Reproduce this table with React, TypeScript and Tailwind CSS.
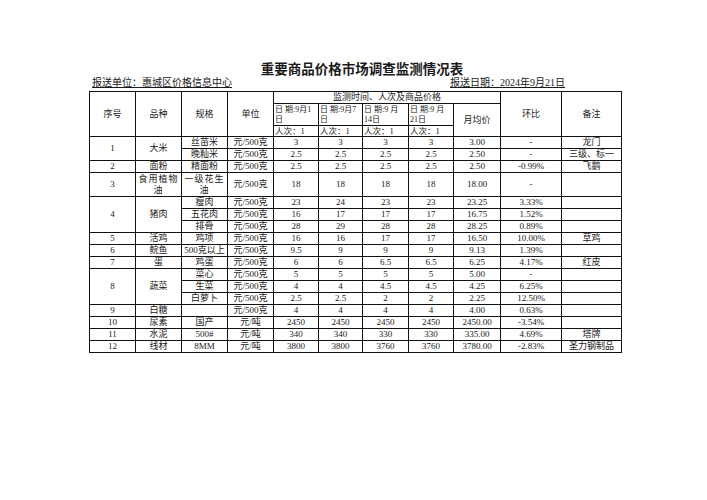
type Row = {
  no?: string;
  noSpan?: number;
  kind?: string;
  spec: string;
  unit?: string;
  p: string[];
  avg: string;
  ratio: string;
  note?: string;
  tall?: boolean;
};

const rows: Row[] = [
  { no: '1', noSpan: 2, kind: '大米', spec: '丝苗米', p: ['3', '3', '3', '3'], avg: '3.00', ratio: '-', note: '龙门' },
  { spec: '晚籼米', p: ['2.5', '2.5', '2.5', '2.5'], avg: '2.50', ratio: '-', note: '三级、标一' },
  { no: '2', kind: '面粉', spec: '精面粉', p: ['2.5', '2.5', '2.5', '2.5'], avg: '2.50', ratio: '-0.99%', note: '飞鹅' },
  { no: '3', kind: '食用植物油', spec: '一级花生油', p: ['18', '18', '18', '18'], avg: '18.00', ratio: '-', tall: true },
  { no: '4', noSpan: 3, kind: '猪肉', spec: '瘦肉', p: ['23', '24', '23', '23'], avg: '23.25', ratio: '3.33%' },
  { spec: '五花肉', p: ['16', '17', '17', '17'], avg: '16.75', ratio: '1.52%' },
  { spec: '排骨', p: ['28', '29', '28', '28'], avg: '28.25', ratio: '0.89%' },
  { no: '5', kind: '活鸡', spec: '鸡项', p: ['16', '16', '17', '17'], avg: '16.50', ratio: '10.00%', note: '草鸡' },
  { no: '6', kind: '鲩鱼', spec: '500克以上', p: ['9.5', '9', '9', '9'], avg: '9.13', ratio: '1.39%' },
  { no: '7', kind: '蛋', spec: '鸡蛋', p: ['6', '6', '6.5', '6.5'], avg: '6.25', ratio: '4.17%', note: '红皮' },
  { no: '8', noSpan: 3, kind: '蔬菜', spec: '菜心', p: ['5', '5', '5', '5'], avg: '5.00', ratio: '-' },
  { spec: '生菜', p: ['4', '4', '4.5', '4.5'], avg: '4.25', ratio: '6.25%' },
  { spec: '白萝卜', p: ['2.5', '2.5', '2', '2'], avg: '2.25', ratio: '12.50%' },
  { no: '9', kind: '白糖', spec: '', p: ['4', '4', '4', '4'], avg: '4.00', ratio: '0.63%' },
  { no: '10', kind: '尿素', spec: '国产', unit: '元/吨', p: ['2450', '2450', '2450', '2450'], avg: '2450.00', ratio: '-3.54%' },
  { no: '11', kind: '水泥', spec: '500#', unit: '元/吨', p: ['340', '340', '330', '330'], avg: '335.00', ratio: '4.69%', note: '塔牌' },
  { no: '12', kind: '线材', spec: '8MM', unit: '元/吨', p: ['3800', '3800', '3760', '3760'], avg: '3780.00', ratio: '-2.83%', note: '圣力钢制品' },
];

const dates = [
  ['日 期:9月1', '日'],
  ['日 期:9月7', '日'],
  ['日 期:9 月', '14日'],
  ['日 期:9 月', '21日'],
];

const cell = 'border border-[#111] p-0 text-center align-middle text-[9px] leading-[11px]';

export default function App() {
  return (
    <div className="w-[707px] h-[500px] bg-white text-[#1a1a1a] font-['Liberation_Serif','Noto_Sans_CJK_SC',serif] pt-[59px]">
      <div className="ml-[89px] w-[540px] pl-[6px] text-center text-[13.5px] leading-[18px] font-bold font-['Noto_Sans_CJK_SC',sans-serif]">
        重要商品价格市场调查监测情况表
      </div>
      <div className="ml-[92px] w-[529px] h-[14px] flex text-[10px] leading-[12px]">
        <span className="w-[358px] underline underline-offset-1">报送单位：惠城区价格信息中心</span>
        <span className="underline underline-offset-1">报送日期：2024年9月21日</span>
      </div>
      <table className="ml-[89px] w-[532px] table-fixed border-collapse">
        <colgroup>
          <col className="w-[46px]" />
          <col className="w-[46px]" />
          <col className="w-[46px]" />
          <col className="w-[46px]" />
          <col className="w-[45px]" />
          <col className="w-[44px]" />
          <col className="w-[46px]" />
          <col className="w-[45px]" />
          <col className="w-[47px]" />
          <col className="w-[61px]" />
          <col className="w-[60px]" />
        </colgroup>
        <thead>
          <tr className="h-[12px]">
            <td rowSpan={3} className={cell}>序号</td>
            <td rowSpan={3} className={cell}>品种</td>
            <td rowSpan={3} className={cell}>规格</td>
            <td rowSpan={3} className={cell}>单位</td>
            <td colSpan={5} className={cell}>监测时间、人次及商品价格</td>
            <td rowSpan={3} className={cell}>环比</td>
            <td rowSpan={3} className={cell}>备注</td>
          </tr>
          <tr className="h-[22px]">
            {dates.map((d, i) => (
              <td key={i} className="border border-[#111] p-0 pl-[1px] text-left align-top pt-[1px] whitespace-nowrap overflow-hidden text-[8px] leading-[10px]">
                {d[0]}
                <br />
                {d[1]}
              </td>
            ))}
            <td rowSpan={2} className={cell}>月均价</td>
          </tr>
          <tr className="h-[11px]">
            {dates.map((_, i) => (
              <td key={i} className="border border-[#111] p-0 pl-[1px] text-left whitespace-nowrap text-[8.5px] leading-[10px]">
                人次：1
              </td>
            ))}
          </tr>
        </thead>
        <tbody>
          {rows.map((r, i) => (
            <tr key={i} className={r.tall ? 'h-[24px]' : 'h-[12px]'}>
              {r.no !== undefined && (
                <>
                  <td rowSpan={r.noSpan ?? 1} className={cell}>{r.no}</td>
                  <td rowSpan={r.noSpan ?? 1} className={r.tall ? `${cell} tracking-[1px] px-[2px]` : `${cell} whitespace-nowrap`}>
                    {r.kind}
                  </td>
                </>
              )}
              <td className={r.tall ? `${cell} tracking-[1px] px-[2px]` : `${cell} whitespace-nowrap`}>{r.spec}</td>
              <td className={`${cell} whitespace-nowrap`}>{r.unit ?? '元/500克'}</td>
              {r.p.map((v, j) => (
                <td key={j} className={cell}>{v}</td>
              ))}
              <td className={cell}>{r.avg}</td>
              <td className={cell}>{r.ratio}</td>
              <td className={`${cell} whitespace-nowrap`}>{r.note ?? ''}</td>
            </tr>
          ))}
        </tbody>
      </table>
    </div>
  );
}
